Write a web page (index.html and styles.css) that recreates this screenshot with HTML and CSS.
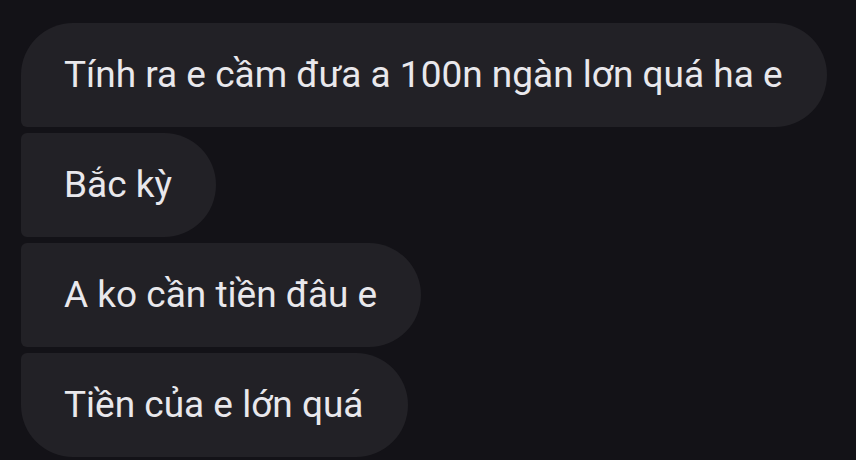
FILE: index.html
```html
<!DOCTYPE html>
<html lang="vi">
<head>
<meta charset="utf-8">
<link rel="stylesheet" href="styles.css">
</head>
<body>
<div class="thread">
  <div class="bubble first">Tính ra e cầm đưa a 100n ngàn lơn quá ha e</div>
  <div class="bubble middle">Bắc kỳ</div>
  <div class="bubble middle">A ko cần tiền đâu e</div>
  <div class="bubble last">Tiền của e lớn quá</div>
</div>
</body>
</html>
```
FILE: styles.css
```css
html, body {
  margin: 0;
  padding: 0;
  background: #131217;
  height: 100%;
  overflow: hidden;
}
.thread {
  display: flex;
  flex-direction: column;
  align-items: flex-start;
  gap: 6px;
  padding: 23px 0 0 21px;
}
.bubble {
  box-sizing: border-box;
  height: 104px;
  display: flex;
  align-items: center;
  padding: 0 44px 2px 43px;
  background: #222126;
  color: #e9e8ec;
  font-family: Roboto, "Noto Sans", sans-serif;
  font-size: 37px;
  white-space: nowrap;
  border-radius: 52px;
}
.first {
  border-bottom-left-radius: 6px;
}
.middle {
  border-top-left-radius: 6px;
  border-bottom-left-radius: 6px;
}
.last {
  border-top-left-radius: 6px;
}
```
